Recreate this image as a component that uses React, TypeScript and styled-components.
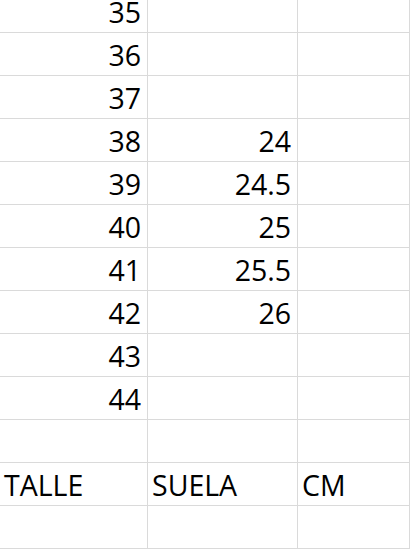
import React from 'react';
import styled, { createGlobalStyle } from 'styled-components';

const GlobalStyle = createGlobalStyle`
  html, body {
    margin: 0;
    padding: 0;
    background: #fff;
    overflow: hidden;
  }
`;

const gridColor = '#dadada';

const Sheet = styled.div`
  margin-top: -10px;
  display: flex;
  flex-direction: column;
  font-family: 'Open Sans', 'Noto Sans', sans-serif;
  font-size: 28.5px;
  color: #000;
`;

const Row = styled.div`
  display: grid;
  grid-template-columns: 148px 150px 1fr;
  height: 43px;
`;

const Cell = styled.div<{ $align?: 'left' | 'right' }>`
  box-sizing: border-box;
  display: flex;
  align-items: flex-end;
  justify-content: ${(p) => (p.$align === 'left' ? 'flex-start' : 'flex-end')};
  border-right: 1px solid ${gridColor};
  border-bottom: 1px solid ${gridColor};
  padding: 0 6px 6px ${(p) => (p.$align === 'left' ? '4px' : '0')};
  line-height: 1;
  white-space: nowrap;
`;

const rows: [string, string, string][] = [
  ['35', '', ''],
  ['36', '', ''],
  ['37', '', ''],
  ['38', '24', ''],
  ['39', '24.5', ''],
  ['40', '25', ''],
  ['41', '25.5', ''],
  ['42', '26', ''],
  ['43', '', ''],
  ['44', '', ''],
  ['', '', ''],
];

const headers = ['TALLE', 'SUELA', 'CM'];

const App = () => (
  <>
    <GlobalStyle />
    <Sheet>
      {rows.map((r, i) => (
        <Row key={i}>
          {r.map((v, j) => (
            <Cell key={j}>{v}</Cell>
          ))}
        </Row>
      ))}
      <Row>
        {headers.map((h) => (
          <Cell key={h} $align="left">
            {h}
          </Cell>
        ))}
      </Row>
      <Row>
        <Cell />
        <Cell />
        <Cell />
      </Row>
    </Sheet>
  </>
);

export default App;
